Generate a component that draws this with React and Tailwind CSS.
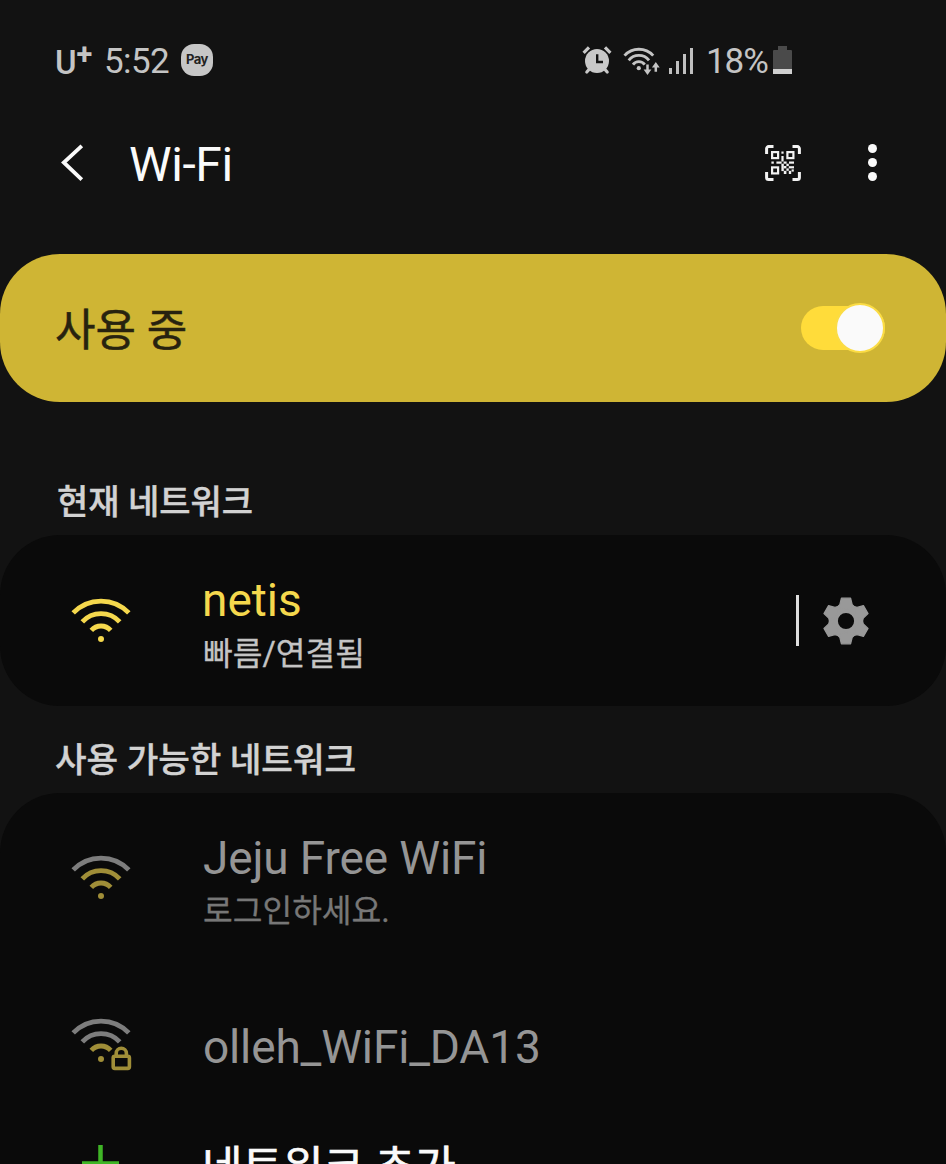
const networks = [
  { name: "Jeju Free WiFi", note: "로그인하세요.", level: 2, locked: false },
  { name: "olleh_WiFi_DA13", note: null, level: 1, locked: true },
];

function WifiIcon({ level = 3, on = "#f5d84d", off = "#7d7d7d", locked = false }) {
  return (
    <svg width="62" height="54" viewBox="0 0 62 54" fill="none" strokeWidth="4.8">
      <path d="M2.2 15.9A38.5 38.5 0 0 1 57.8 15.9" stroke={level > 2 ? on : off} />
      <path d="M11.3 24.9A25.4 25.4 0 0 1 48.7 24.9" stroke={level > 1 ? on : off} />
      <path d="M20.3 33.4A12.9 12.9 0 0 1 39.7 33.4" stroke={on} />
      <circle cx="30" cy="42" r="3" fill={on} />
      {locked && (
        <g stroke={on} strokeWidth="3.6">
          <rect x="42.2" y="39.2" width="16.2" height="12.2" rx="1.6" fill="#0a0a0a" />
          <path d="M45.2 39v-2.6a5.1 5.1 0 0 1 10.2 0v2.6" />
        </g>
      )}
    </svg>
  );
}

function GearIcon() {
  return (
    <svg width="50" height="50" viewBox="-25 -25 50 50">
      <circle r="12.6" fill="none" stroke="#999" strokeWidth="9" />
      {[0, 60, 120, 180, 240, 300].map((deg) => (
        <path
          key={deg}
          d="M-4.6 -22.8L4.6 -22.8L6.2 -16.4L8.6 -14L0 -11L-8.6 -14L-6.2 -16.4Z"
          transform={`rotate(${deg})`}
          fill="#999"
          stroke="#999"
          strokeWidth="1.2"
          strokeLinejoin="round"
        />
      ))}
    </svg>
  );
}

function QrScanIcon() {
  return (
    <svg width="36" height="36" viewBox="0 0 36 36" fill="none" stroke="#f2f2f2">
      <g strokeWidth="3" strokeLinejoin="round">
        <path d="M1.6 9V3.6a2 2 0 0 1 2-2H8.5" />
        <path d="M27.5 1.6H32.4a2 2 0 0 1 2 2V9" />
        <path d="M34.4 27V32.4a2 2 0 0 1-2 2H27.5" />
        <path d="M8.5 34.4H3.6a2 2 0 0 1-2-2V27" />
      </g>
      <g strokeWidth="2.2">
        <rect x="7.1" y="7.1" width="6" height="6" />
        <rect x="22.4" y="7.1" width="6" height="6" />
        <rect x="7.1" y="22.4" width="6" height="6" />
      </g>
      <g fill="#f2f2f2" stroke="none">
        <rect x="16.4" y="6.5" width="2.2" height="2.2" />
        <rect x="16.4" y="11" width="2.2" height="5.5" />
        <rect x="6.4" y="16.5" width="2.4" height="2.2" />
        <rect x="11.4" y="16.5" width="5.2" height="2.2" />
        <rect x="18.6" y="16.5" width="3" height="2.2" />
        <rect x="24" y="16.5" width="5" height="2.2" />
        <rect x="16.4" y="18.7" width="2.4" height="7.4" />
        <rect x="21.4" y="18.7" width="2.4" height="2.4" />
        <rect x="18.8" y="21" width="2.6" height="2.4" />
        <rect x="23.8" y="21.2" width="5.2" height="2.2" />
        <rect x="21.4" y="23.4" width="2.4" height="2.4" />
        <rect x="18.8" y="25.8" width="2.6" height="3.2" />
        <rect x="23.8" y="25.8" width="2.4" height="3.2" />
        <rect x="26.6" y="24.4" width="2.2" height="2.2" />
      </g>
    </svg>
  );
}

function AlarmIcon() {
  return (
    <svg width="30" height="30" viewBox="0 0 30 30" fill="none" stroke="#c8c8c8">
      <circle cx="15" cy="16" r="12" fill="#c8c8c8" stroke="none" />
      <path d="M1.6 7.8L7 2.4M23 2.4L28.4 7.8" strokeWidth="3.2" />
      <path d="M7 24.5L4.8 27M23 24.5L25.2 27" strokeWidth="3.2" strokeLinecap="round" />
      <path d="M15.2 9.2V17H21" stroke="#121212" strokeWidth="2.4" />
    </svg>
  );
}

function WifiStatusIcon() {
  return (
    <svg width="38" height="30" viewBox="0 0 38 30" fill="none" stroke="#c4c4c4">
      <g strokeWidth="2.9">
        <path d="M1.5 9.6A19.3 19.3 0 0 1 30.2 9.6" />
        <path d="M5.7 14.3A13 13 0 0 1 26 14.3" />
        <path d="M10 18.6A7.2 7.2 0 0 1 21.7 18.6" />
      </g>
      <circle cx="15.8" cy="22.2" r="2.1" fill="#c4c4c4" stroke="none" />
      <path d="M24.5 18.6V25M32.8 25.8V19.5" strokeWidth="2.5" />
      <path d="M20.6 23.6H28.4L24.5 29ZM28.9 21.5H36.7L32.8 16.1Z" fill="#c4c4c4" stroke="none" />
    </svg>
  );
}

function StatusBar() {
  return (
    <div className="flex h-[122px] shrink-0 items-center pl-[55px] pr-[154px] text-[35px] text-[#c4c4c4]">
      <div className="flex w-[49px] items-start leading-none">
        <span className="pt-[3px] text-[33px] font-medium">U</span>
        <span className="-mt-[3px] text-[29px] font-bold">+</span>
      </div>
      <span className="w-[77px] pt-[2px] tracking-[-0.6px]">5:52</span>
      <span className="-mt-0.5 flex size-8 items-center justify-center rounded-[13px] bg-[#c6c6c6] pb-px font-['Inter'] text-[13px] font-bold tracking-[-0.5px] text-[#222]">
        Pay
      </span>
      <div className="ml-auto flex items-center">
        <span className="-mt-[3px] block">
          <AlarmIcon />
        </span>
        <span className="ml-[11px] block">
          <WifiStatusIcon />
        </span>
        <div className="ml-[8px] flex h-[26px] items-end gap-[4px]">
          <span className="h-1.5 w-[3px] bg-[#c0c0c0]" />
          <span className="h-[13px] w-[3px] bg-[#c0c0c0]" />
          <span className="h-5 w-[3px] bg-[#c0c0c0]" />
          <span className="h-[26px] w-[3px] bg-[#c0c0c0]" />
        </div>
        <span className="ml-[13px] w-[67px] whitespace-nowrap pt-[2px] tracking-[-1.1px]">18%</span>
        <div className="-mt-0.5 flex flex-col items-center">
          <span className="h-1 w-[9px] bg-[#4a4a4a]" />
          <span className="h-[19px] w-[19px] rounded-t-[1px] bg-[#4a4a4a]" />
          <span className="h-[5px] w-[19px] bg-[#cfcfcf]" />
        </div>
      </div>
    </div>
  );
}

function Header() {
  return (
    <header className="flex h-[132px] shrink-0 items-start pl-[61px] pr-[69px]">
      <svg className="mt-[22px]" width="23" height="37" viewBox="0 0 23 37" fill="none">
        <path d="M20.8 1.8L2.8 18.5L20.8 35.6" stroke="#fafafa" strokeWidth="3.8" />
      </svg>
      <h1 className="ml-[45px] mt-[15px] text-[48px] leading-[56px] tracking-[-0.4px] text-[#fafafa]">Wi-Fi</h1>
      <div className="ml-auto mt-[22px] flex items-center gap-[67px]">
        <QrScanIcon />
        <div className="flex flex-col gap-[5px]">
          <span className="size-[9px] rounded-full bg-[#fafafa]" />
          <span className="size-[9px] rounded-full bg-[#fafafa]" />
          <span className="size-[9px] rounded-full bg-[#fafafa]" />
        </div>
      </div>
    </header>
  );
}

export default function App() {
  return (
    <div className="flex h-[1164px] w-[946px] flex-col overflow-hidden bg-[#121212] font-[Roboto,'Noto_Sans_CJK_KR',sans-serif]">
      <StatusBar />
      <Header />

      {/* Master switch */}
      <div className="flex h-[148px] shrink-0 items-center justify-between rounded-[60px] bg-[#cfb534] pl-[55px] pr-[61px]">
        <span className="pt-[5px] text-[44px] leading-none text-[#27220f] [-webkit-text-stroke:0.5px_#27220f]">사용 중</span>
        <div className="flex h-[44px] w-[84px] items-center justify-end rounded-full bg-[#ffdc3a]">
          <span className="size-[50px] shrink-0 rounded-full border-2 border-[#fbdc45] bg-[#fafafa]" />
        </div>
      </div>

      <h2 className="mt-[77px] h-[56px] shrink-0 pl-[57px] text-[34px] font-medium leading-[46px] text-[#d2d2d2] [-webkit-text-stroke:0.4px_#d2d2d2]">
        현재 네트워크
      </h2>

      {/* Connected network */}
      <div className="flex h-[171px] shrink-0 items-start rounded-[60px] bg-[#0a0a0a] pl-[71px] pr-[75px]">
        <div className="mt-[62px] w-[131px]">
          <WifiIcon />
        </div>
        <div className="mt-[38px]">
          <div className="text-[46px] leading-[54px] text-[#f5d84d]">netis</div>
          <div className="mt-[4px] pl-px text-[32.3px] leading-[46px] text-[#c4c4c4] [-webkit-text-stroke:0.3px_#c4c4c4]">
            빠름/연결됨
          </div>
        </div>
        <div className="ml-auto mt-[60px] flex items-center gap-[22px]">
          <span className="h-[51px] w-[3px] bg-[#dedede]" />
          <GearIcon />
        </div>
      </div>

      <h2 className="mt-[31px] h-[56px] shrink-0 pl-[55px] text-[34.3px] font-medium leading-[46px] text-[#d2d2d2] [-webkit-text-stroke:0.4px_#d2d2d2]">
        사용 가능한 네트워크
      </h2>

      {/* Available networks */}
      <div className="h-[440px] shrink-0 rounded-t-[60px] bg-[#0a0a0a] pl-[71px]">
        {networks.map(({ name, note, level, locked }) => (
          <div key={name} className={note ? "flex h-[189px] pt-[38px]" : "flex h-[146px] pt-[38px]"}>
            <div className={note ? "w-[132px] pt-[23px]" : "-mt-[3px] w-[132px]"}>
              <WifiIcon level={level} on="#a08e38" locked={locked} />
            </div>
            <div>
              <div className="text-[46px] leading-[54px] tracking-[-0.15px] text-[#959595]">{name}</div>
              {note && (
                <div className="mt-[3px] text-[32.3px] leading-[46px] text-[#777] [-webkit-text-stroke:0.3px_#777]">{note}</div>
              )}
            </div>
          </div>
        ))}
        <div className="flex">
          <svg className="ml-[11px] mt-[17px]" width="37" height="37" viewBox="0 0 37 37">
            <path d="M18.5 0V37M0 18.5H37" stroke="#3fb526" strokeWidth="4.5" />
          </svg>
          <span className="ml-[83px] mt-[10px] text-[44px] leading-[60px] text-[#fafafa] [-webkit-text-stroke:0.7px_#fafafa]">
            네트워크 추가
          </span>
        </div>
      </div>
    </div>
  );
}
